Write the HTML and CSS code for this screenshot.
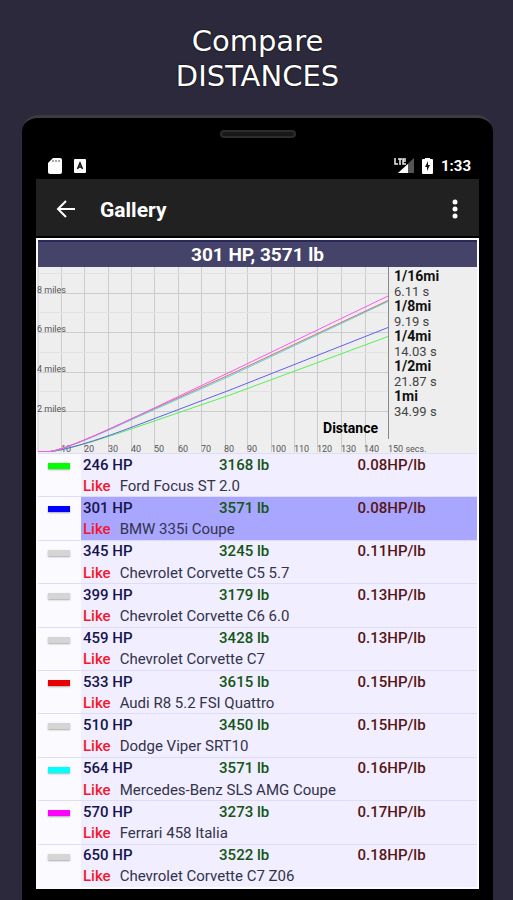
FILE: index.html
```
<!DOCTYPE html>
<html lang="en">
<head>
  <meta charset="UTF-8">
  <meta name="viewport" content="width=device-width, initial-scale=1">
  <title>Compare distances</title>
  <link rel="stylesheet" href="styles.css">
</head>
<body>
  <h1 class="headline">Compare<br>DISTANCES</h1>

  <div class="phone">
    <div class="speaker"></div>

    <!-- status bar -->
    <div class="status">
      <svg width="14" height="18" viewBox="0 0 14 18"><path d="M5 1h7q2 0 2 2v12q0 2-2 2H2q-2 0-2-2V6z" fill="#fff"/><path d="M5 3v2M8 3v2M11 3v2" stroke="#555" stroke-width="1"/></svg>
      <svg width="12" height="18" viewBox="0 0 12 18"><rect y="2" width="12" height="14" rx="1" fill="#fff"/><path d="M3.500 12L6 6l2.500 6M4.500 10h3" fill="none" stroke="#111" stroke-width="1.500"/></svg>
      <span class="spacer"></span>
      <svg width="20" height="18" viewBox="0 0 20 18"><path d="M4 16L20 1v15z" fill="#555"/><path d="M4 16l10-9v9z" fill="#fff"/><path d="M1 1v6h3M4 2h4M6 2v6M12 2H9v5h3M9 4h3" fill="none" stroke="#eee" stroke-width="1.500"/></svg>
      <svg width="11" height="18" viewBox="0 0 11 18"><path d="M3 1h5v1h2q1 0 1 1v13q0 1-1 1H1q-1 0-1-1V3q0-1 1-1h2z" fill="#fff"/><path d="M6 4L3 10h2v4l3-6H6z" fill="#111"/></svg>
      <span class="clock">1:33</span>
    </div>

    <!-- app bar -->
    <header class="appbar">
      <button class="icon-btn" aria-label="Back"><svg width="20" height="20" viewBox="0 0 20 20"><path d="M19 10H3M10 2l-8 8 8 8" fill="none" stroke="#fff" stroke-width="2"/></svg></button>
      <h2>Gallery</h2>
      <button class="icon-btn" aria-label="More"><svg width="6" height="20" viewBox="0 0 6 20" fill="#fff"><circle cx="3" cy="3" r="2.500"/><circle cx="3" cy="10" r="2.500"/><circle cx="3" cy="17" r="2.500"/></svg></button>
    </header>

    <main class="screen">
      <h3 class="selected-car">301 HP, 3571 lb</h3>

      <!-- distance chart -->
      <div class="chart">
        <svg class="plot" viewBox="0 0 350 186">
          <path class="grid" d="M0 0V185M23.5 0V185M46.5 0V185M70.5 0V185M93.5 0V185M116.5 0V185M140.5 0V185M163.5 0V185M187.5 0V185M209.5 0V185M233.5 0V185M256.5 0V185M279.5 0V185M303.5 0V185M327.5 0V185M0 26.5H350M0 65.5H350M0 105.5H350M0 144.5H350"/>
          <path class="grid minor" d="M0 6.5H350M0 45.5H350M0 85.5H350M0 124.5H350"/>
          <path class="axis" d="M350.5 0V172"/>
          <g class="labels">
            <text x="-1" y="26">8 miles</text>
            <text x="-1" y="65">6 miles</text>
            <text x="-1" y="105">4 miles</text>
            <text x="-1" y="145">2 miles</text>
            <text x="23" y="185">10</text>
            <text x="46" y="185">20</text>
            <text x="70" y="185">30</text>
            <text x="93" y="185">40</text>
            <text x="116" y="185">50</text>
            <text x="140" y="185">60</text>
            <text x="163" y="185">70</text>
            <text x="186" y="185">80</text>
            <text x="209" y="185">90</text>
            <text x="233" y="185">100</text>
            <text x="256" y="185">110</text>
            <text x="279" y="185">120</text>
            <text x="303" y="185">130</text>
            <text x="326" y="185">140</text>
            <text x="350" y="185">150 secs.</text>
          </g>
          <g class="curves">
            <path stroke="#55f255" d="M0 184.500H12C30 183 70 170 93 162L192 128 350 69.500"/>
            <path stroke="#6060f0" d="M0 184.500H12C30 183 68 170 93 160.500L192 123 350 60.500"/>
            <path stroke="#45dede" d="M0 184.500H12C28 182 67 165 93 153L192 109 350 34.500"/>
            <path stroke="#e86a6a" d="M0 184.500H12C28 182 66 165 93 152L192 107.500 350 33.500"/>
            <path stroke="#f55cf0" d="M0 184.500H12C28 182 65 165 93 152L192 105 350 29"/>
          </g>
          <text class="caption" x="340" y="166">Distance</text>
        </svg>
        <dl class="times">
          <dt>1/16mi</dt><dd>6.11 s</dd>
          <dt>1/8mi</dt><dd>9.19 s</dd>
          <dt>1/4mi</dt><dd>14.03 s</dd>
          <dt>1/2mi</dt><dd>21.87 s</dd>
          <dt>1mi</dt><dd>34.99 s</dd>
        </dl>
      </div>

      <!-- cars -->
      <table class="cars">
        <colgroup><col class="c-mark"><col class="c-hp"><col class="c-lb"><col></colgroup>
        <tbody>
          <tr><td rowspan="2" class="mark"><button class="toggle green" aria-label="Show Ford Focus ST 2.0"></button></td><td class="hp">246 HP</td><td class="lb">3168 lb</td><td class="ratio">0.08HP/lb</td></tr>
          <tr><td colspan="3" class="name"><a href="#">Like</a>Ford Focus ST 2.0</td></tr>
        </tbody>
        <tbody class="active">
          <tr><td rowspan="2" class="mark"><button class="toggle blue" aria-label="Show BMW 335i Coupe"></button></td><td class="hp">301 HP</td><td class="lb">3571 lb</td><td class="ratio">0.08HP/lb</td></tr>
          <tr><td colspan="3" class="name"><a href="#">Like</a>BMW 335i Coupe</td></tr>
        </tbody>
        <tbody>
          <tr><td rowspan="2" class="mark"><button class="toggle" aria-label="Show Chevrolet Corvette C5 5.7"></button></td><td class="hp">345 HP</td><td class="lb">3245 lb</td><td class="ratio">0.11HP/lb</td></tr>
          <tr><td colspan="3" class="name"><a href="#">Like</a>Chevrolet Corvette C5 5.7</td></tr>
        </tbody>
        <tbody>
          <tr><td rowspan="2" class="mark"><button class="toggle" aria-label="Show Chevrolet Corvette C6 6.0"></button></td><td class="hp">399 HP</td><td class="lb">3179 lb</td><td class="ratio">0.13HP/lb</td></tr>
          <tr><td colspan="3" class="name"><a href="#">Like</a>Chevrolet Corvette C6 6.0</td></tr>
        </tbody>
        <tbody>
          <tr><td rowspan="2" class="mark"><button class="toggle" aria-label="Show Chevrolet Corvette C7"></button></td><td class="hp">459 HP</td><td class="lb">3428 lb</td><td class="ratio">0.13HP/lb</td></tr>
          <tr><td colspan="3" class="name"><a href="#">Like</a>Chevrolet Corvette C7</td></tr>
        </tbody>
        <tbody>
          <tr><td rowspan="2" class="mark"><button class="toggle red" aria-label="Show Audi R8 5.2 FSI Quattro"></button></td><td class="hp">533 HP</td><td class="lb">3615 lb</td><td class="ratio">0.15HP/lb</td></tr>
          <tr><td colspan="3" class="name"><a href="#">Like</a>Audi R8 5.2 FSI Quattro</td></tr>
        </tbody>
        <tbody>
          <tr><td rowspan="2" class="mark"><button class="toggle" aria-label="Show Dodge Viper SRT10"></button></td><td class="hp">510 HP</td><td class="lb">3450 lb</td><td class="ratio">0.15HP/lb</td></tr>
          <tr><td colspan="3" class="name"><a href="#">Like</a>Dodge Viper SRT10</td></tr>
        </tbody>
        <tbody>
          <tr><td rowspan="2" class="mark"><button class="toggle cyan" aria-label="Show Mercedes-Benz SLS AMG Coupe"></button></td><td class="hp">564 HP</td><td class="lb">3571 lb</td><td class="ratio">0.16HP/lb</td></tr>
          <tr><td colspan="3" class="name"><a href="#">Like</a>Mercedes-Benz SLS AMG Coupe</td></tr>
        </tbody>
        <tbody>
          <tr><td rowspan="2" class="mark"><button class="toggle magenta" aria-label="Show Ferrari 458 Italia"></button></td><td class="hp">570 HP</td><td class="lb">3273 lb</td><td class="ratio">0.17HP/lb</td></tr>
          <tr><td colspan="3" class="name"><a href="#">Like</a>Ferrari 458 Italia</td></tr>
        </tbody>
        <tbody>
          <tr><td rowspan="2" class="mark"><button class="toggle" aria-label="Show Chevrolet Corvette C7 Z06"></button></td><td class="hp">650 HP</td><td class="lb">3522 lb</td><td class="ratio">0.18HP/lb</td></tr>
          <tr><td colspan="3" class="name"><a href="#">Like</a>Chevrolet Corvette C7 Z06</td></tr>
        </tbody>
      </table>
    </main>
  </div>
</body>
</html>
```
FILE: styles.css
```
* { box-sizing: border-box; }
body {
  margin: 0;
  min-height: 100vh;
  display: flex;
  flex-direction: column;
  padding: 24px 20px 0 22px;
  background: #2b293b;
  font-family: Roboto, "Liberation Sans", sans-serif;
}
h1, h2, h3, dl, dd { margin: 0; }
button { border: 0; padding: 0; background: none; cursor: pointer; }
svg { display: block; }

.headline {
  margin-bottom: 21px;
  color: #fff;
  font: 29px/35px "DejaVu Sans", sans-serif;
  text-align: center;
  text-shadow: 0 0 2px #000;
}

/* phone body */
.phone {
  flex: 1;
  padding: 12px 14px;
  background: #000;
  border-top: 3px solid #3c3c40;
  border-radius: 16px 16px 0 0;
}
.speaker {
  width: 76px;
  height: 8px;
  margin: 0 auto;
  border: 2px solid #2c2c2c;
  border-radius: 4px;
  background: #181818;
}
.status {
  display: flex;
  align-items: center;
  gap: 8px;
  height: 26px;
  margin-top: 15px;
  padding: 0 8px 0 12px;
}
.status svg:nth-child(2) { margin-left: 4px; }
.spacer { flex: 1; }
.clock { color: #fff; font-size: 15px; font-weight: 700; }

.appbar {
  display: flex;
  align-items: center;
  height: 57px;
  margin-bottom: 2px;
  padding: 0 21px 0 20px;
  background: #212121;
}
.appbar h2 {
  flex: 1;
  margin-left: 24px;
  padding-top: 4px;
  color: #fff;
  font-size: 21px;
  line-height: 26px;
  font-weight: 700;
}
.icon-btn { padding-top: 2px; }

/* content */
.screen { border: 2px solid #fcfcff; background: #f0eeff; }
.selected-car {
  background: #45436a;
  border-top: 2px solid #2a2856;
  color: #fff;
  font-size: 19px;
  line-height: 25px;
  text-align: center;
}
.chart { display: flex; background: #eee; }
.plot { flex: 1; min-width: 0; overflow: visible; }
.grid { fill: none; stroke: #ccc; }
.minor { stroke: #e2e2e2; }
.axis { stroke: #888; }
.labels { font-size: 9px; fill: #555; }
.curves { fill: none; }
.caption { font-size: 14px; font-weight: 700; text-anchor: end; }
.times { width: 89px; padding: 2px 0 0 6px; font-size: 14px; line-height: 15px; }
.times dt { font-weight: 700; color: #111; }
.times dd { color: #444; font-size: 13px; }

.cars {
  width: 100%;
  height: 434px;
  border-spacing: 0;
  table-layout: fixed;
  color: #33334a;
  font-size: 15px;
  line-height: 20px;
}
.c-mark { width: 43px; }
.c-hp { width: 31%; }
.c-lb { width: 32%; }
.cars td { padding: 0 0 0 2px; vertical-align: middle; }
.cars tr:first-child td { border-top: 1px solid #dedcf6; }
.cars .mark { padding: 9px 0 0 10px; background: #fbfbff; vertical-align: top; }
.active td:not(.mark) { background: #a9a6ff; }
.hp, .lb, .ratio { font-weight: 500; }
.hp { color: #15154c; }
.lb { color: #155515; }
.cars .ratio { padding-left: 0; color: #551515; }
.name a { margin-right: 9px; color: #f3182c; font-weight: 500; text-decoration: none; }

.toggle {
  display: block;
  width: 22px;
  height: 6px;
  background: #d5d5d5;
  box-shadow: 0 1px 2px #aaa;
}
.green { background: #0f0; }
.blue { background: #00f; }
.red { background: #e80000; }
.cyan { background: #0ff; }
.magenta { background: #f0f; }
```
